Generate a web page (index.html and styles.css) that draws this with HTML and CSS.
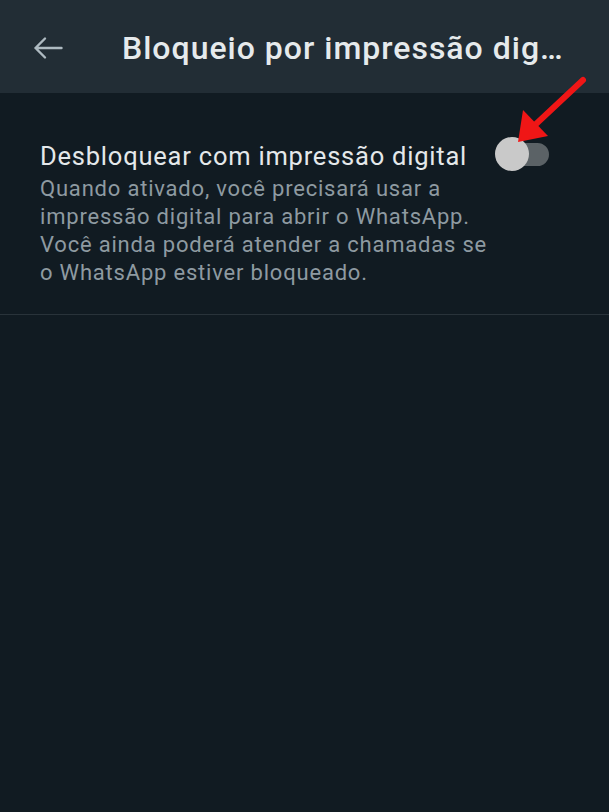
FILE: index.html
```html
<!DOCTYPE html>
<html lang="pt-BR">
<head>
<meta charset="utf-8">
<link rel="stylesheet" href="styles.css">
</head>
<body>
<div class="screen">
  <header class="topbar">
    <svg class="back" width="30" height="24" viewBox="0 0 30 24" aria-hidden="true">
      <path d="M28.5 12H2.5M12 2.5L2.5 12l9.5 9.5" fill="none" stroke="#aebac1" stroke-width="2.4" stroke-linecap="round" stroke-linejoin="round"/>
    </svg>
    <h1 class="title">Bloqueio por impressão dig…</h1>
  </header>
  <section class="setting">
    <div class="texts">
      <div class="label">Desbloquear com impressão digital</div>
      <p class="desc">Quando ativado, você precisará usar a impressão digital para abrir o WhatsApp. Você ainda poderá atender a chamadas se o WhatsApp estiver bloqueado.</p>
    </div>
    <div class="switch"><span class="track"></span><span class="thumb"></span></div>
  </section>
  <div class="divider"></div>
  <svg class="pointer" width="100" height="80" viewBox="0 0 100 80" aria-hidden="true">
    <path d="M83 10L36 54" stroke="#f01616" stroke-width="6" stroke-linecap="round"/>
    <polygon points="18,72 23,40 48,66" fill="#f01616"/>
  </svg>
</div>
</body>
</html>
```
FILE: styles.css
```css
html, body {
  margin: 0;
  padding: 0;
  background: #111b22;
}
.screen {
  width: 609px;
  height: 812px;
  background: #111b22;
  font-family: Roboto, "Noto Sans", sans-serif;
  position: relative;
  overflow: hidden;
}
.topbar {
  height: 93px;
  background: #222d35;
  display: flex;
  align-items: center;
  padding-left: 33px;
  box-sizing: border-box;
}
.back {
  flex: none;
  margin-top: 3px;
}
.title {
  margin: 2px 0 0 59px;
  font-size: 32px;
  line-height: 40px;
  font-weight: 500;
  color: #e6eaec;
  white-space: nowrap;
  letter-spacing: 1px;
}
.setting {
  display: flex;
  align-items: flex-start;
  padding: 48px 0 0 40px;
  box-sizing: border-box;
  height: 221px;
}
.texts {
  width: 455px;
  flex: none;
}
.label {
  font-size: 25.5px;
  color: #e4e8ea;
  line-height: 30px;
  letter-spacing: 0.78px;
}
.desc {
  margin: 4px 0 0;
  font-size: 22px;
  line-height: 28px;
  color: #8e9aa1;
  letter-spacing: 0.8px;
}
.switch {
  position: relative;
  width: 55px;
  height: 34px;
  margin-top: -4px;
  flex: none;
}
.track {
  position: absolute;
  left: 10px;
  top: 5.5px;
  width: 44px;
  height: 23px;
  border-radius: 12px;
  background: #5b6266;
}
.thumb {
  position: absolute;
  left: 0;
  top: 0;
  width: 34px;
  height: 34px;
  border-radius: 50%;
  background: #c9c9c9;
}
.pointer {
  position: absolute;
  left: 500px;
  top: 70px;
}
.divider {
  height: 1px;
  background: #29333a;
}
```
